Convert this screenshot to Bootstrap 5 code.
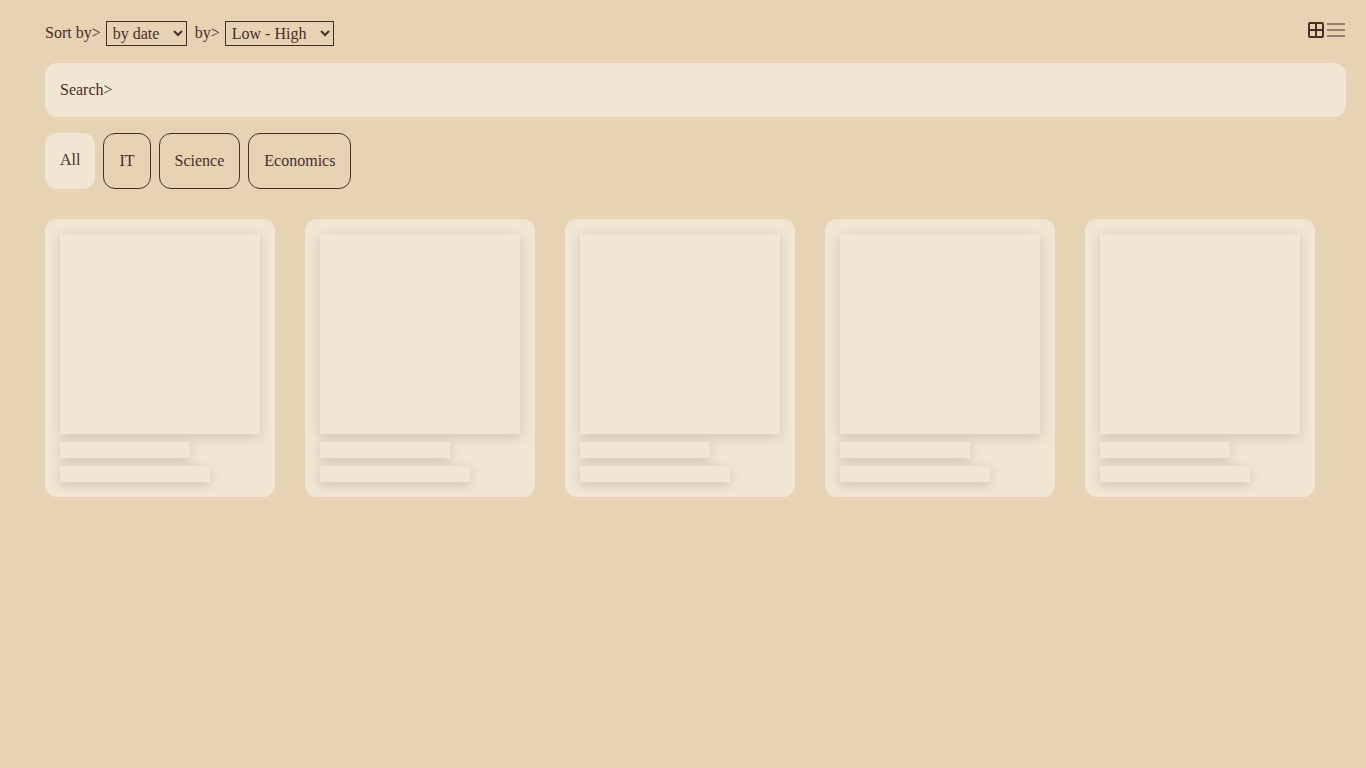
<!DOCTYPE html>
<html lang="en">
<head>
<meta charset="utf-8">
<meta name="viewport" content="width=device-width, initial-scale=1">
<title>Library</title>
<link href="https://cdn.jsdelivr.net/npm/bootstrap@5.3.0/dist/css/bootstrap.min.css" rel="stylesheet">
<style>
  :root { --ink: #4a2c2a; --sand: #e6d3b3; --cream: #f1e6d4; }
  body { background: var(--sand); color: var(--ink); font: 16px/18px "Liberation Serif", serif; }
  main { padding: 20px 20px 20px 45px; }
  .sort-select { height: 25px; padding: 0 2px; border: 1px solid var(--ink); border-radius: 0; background: transparent; color: var(--ink); font: inherit; }
  .sort-field { width: 81px; margin-right: 3px; }
  .sort-order { width: 109px; }
  .sort-bar { height: 27px; gap: 5px; }
  .sort-bar label { padding-bottom: 2px; }
  .view-btn { width: 20px; height: 20px; padding: 0; border: 0; background: none; color: var(--ink); line-height: 0; }
  .view-btn.inactive { opacity: .5; }
  .search-box { height: 54px; margin: 16px 0; padding: 0 15px; border: 0; border-radius: 12px; background: var(--cream); color: var(--ink); font: inherit; }
  .search-box::placeholder { color: var(--ink); opacity: 1; }
  .filter-btn { height: 56px; padding: 0 15px; border: 1px solid var(--ink); border-radius: 12px; background: none; color: var(--ink); }
  .filter-btn.active { border: 0; background: var(--cream); padding-bottom: 2px; }
  .shelf { margin-top: 30px; gap: 30px; }
  .book { width: 230px; padding: 15px; border-radius: 12px; background: var(--cream); }
  .bone { height: 16px; background: var(--cream); box-shadow: 0 3px 12px rgba(0, 0, 0, .15); }
  .cover { height: 200px; }
  .title-bone { width: 130px; }
  .author-bone { width: 150px; }
</style>
</head>
<body>
<main>
  <div class="d-flex justify-content-between align-items-start">
    <div class="sort-bar d-flex align-items-center">
      <label for="sort">Sort by&gt;</label>
      <select id="sort" class="sort-select sort-field"><option>by date</option><option>by name</option></select>
      <label for="order">by&gt;</label>
      <select id="order" class="sort-select sort-order"><option>Low - High</option><option>High - Low</option></select>
    </div>
    <div class="d-flex">
      <button type="button" class="view-btn" aria-label="Grid view"><svg width="20" height="20" viewBox="0 0 20 20" fill="none" stroke="currentColor" stroke-width="2"><rect x="3" y="3" width="14" height="14" rx="1"/><path d="M10 3v14M3 10h14"/></svg></button>
      <button type="button" class="view-btn inactive" aria-label="List view"><svg width="20" height="20" viewBox="0 0 20 20" stroke="currentColor" stroke-width="2"><path d="M1 4h18M1 10h18M1 16h18"/></svg></button>
    </div>
  </div>
  <input class="search-box d-block w-100" type="text" placeholder="Search&gt;" aria-label="Search">
  <div class="d-flex flex-wrap gap-2">
    <button type="button" class="filter-btn active">All</button>
    <button type="button" class="filter-btn">IT</button>
    <button type="button" class="filter-btn">Science</button>
    <button type="button" class="filter-btn">Economics</button>
  </div>
  <div class="shelf d-flex flex-wrap">
    <div class="book d-flex flex-column gap-2"><div class="bone cover"></div><div class="bone title-bone"></div><div class="bone author-bone"></div></div>
    <div class="book d-flex flex-column gap-2"><div class="bone cover"></div><div class="bone title-bone"></div><div class="bone author-bone"></div></div>
    <div class="book d-flex flex-column gap-2"><div class="bone cover"></div><div class="bone title-bone"></div><div class="bone author-bone"></div></div>
    <div class="book d-flex flex-column gap-2"><div class="bone cover"></div><div class="bone title-bone"></div><div class="bone author-bone"></div></div>
    <div class="book d-flex flex-column gap-2"><div class="bone cover"></div><div class="bone title-bone"></div><div class="bone author-bone"></div></div>
  </div>
</main>
<script src="https://cdn.jsdelivr.net/npm/bootstrap@5.3.0/dist/js/bootstrap.bundle.min.js"></script>
</body>
</html>
